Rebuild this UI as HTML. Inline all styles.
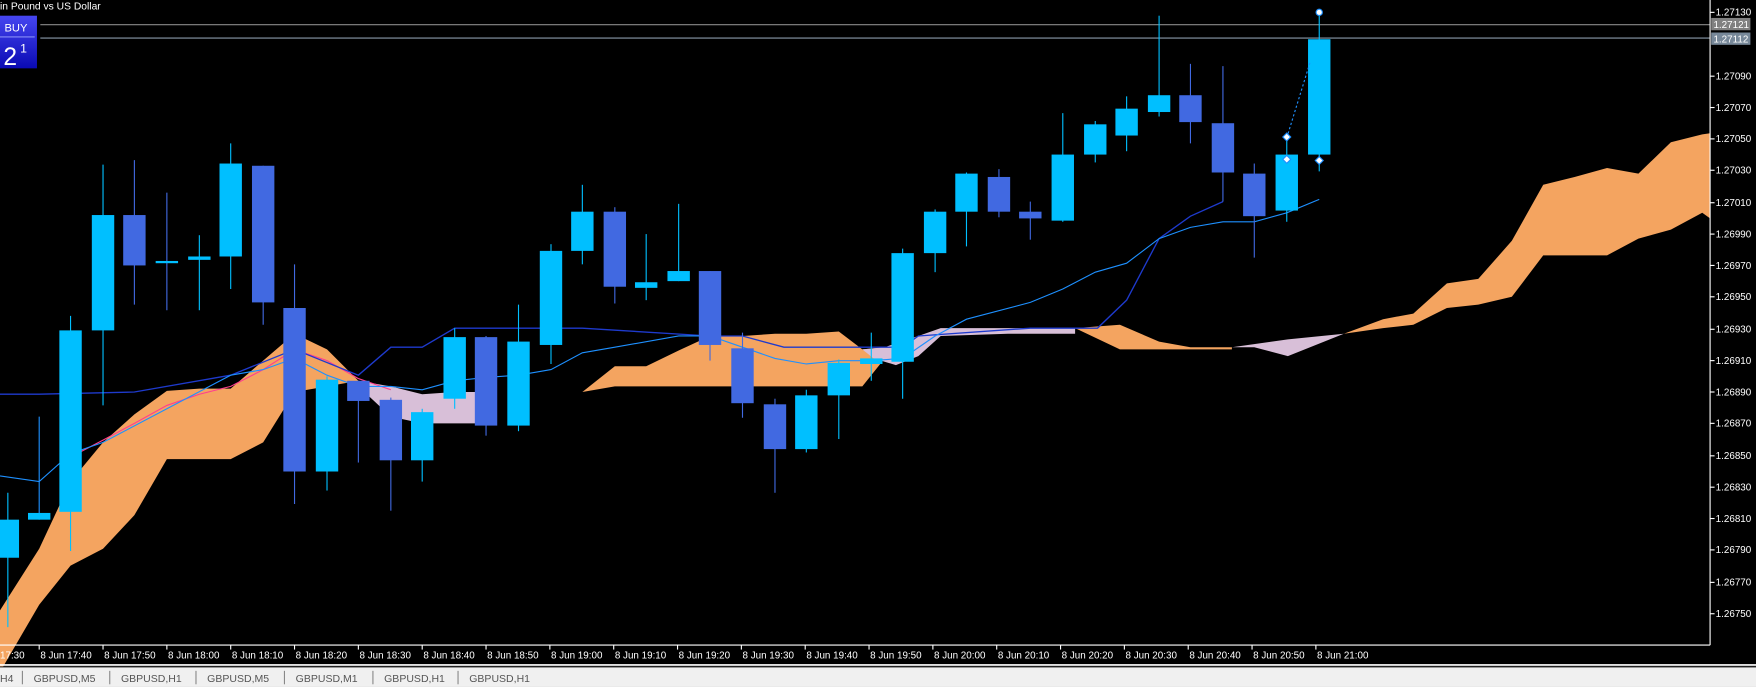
<!DOCTYPE html>
<html><head><meta charset="utf-8"><style>
html,body{margin:0;padding:0;background:#000;width:1756px;height:687px;overflow:hidden}
svg{display:block}
text{font-family:"Liberation Sans","DejaVu Sans",sans-serif}
</style></head><body>
<svg width="1756" height="687" viewBox="0 0 1568 613.4" xmlns="http://www.w3.org/2000/svg">
<rect x="0" y="0" width="1568" height="613.4" fill="#000"/>
<!-- cloud -->
<g stroke="none">
<polygon fill="#F4A460" points="0,545 35,490 63,430 92,395 120,370 149,349 178,347 206,347 235,322 263,298 292,312 320,340 292,345 263,350 235,395 206,410 178,410 149,410 120,460 92,490 63,505 35,540 0,600 0,613"/>
<polygon fill="#D8BFD8" points="320,340 349,345 377,352 406,350 434,350 434,378 406,378 377,378 349,372 320,345"/>
<polygon fill="#F4A460" points="520,350 549,327 577,327 606,313 634,300 663,300 692,298 720,298 749,296 770,312 790,310 790,320 770,345 749,345 720,345 692,345 663,345 634,345 606,345 577,345 549,345"/>
<polygon fill="#D8BFD8" points="770,312 790,310 820,300 840,293 900,293 960,293 960,298 900,298 840,300 820,318 800,326 780,320"/>
<polygon fill="#F4A460" points="960,293 1000,290 1035,305 1063,310 1100,310 1100,312 1063,312 1000,312"/>
<polygon fill="#D8BFD8" points="1100,310 1150,303 1200,298 1150,318 1120,310"/>
<polygon fill="#F4A460" points="1200,298 1235,285 1262,280 1292,253 1320,249 1350,215 1378,165 1406,158 1435,150 1463,155 1492,127 1520,120 1527,119 1527,195 1520,190 1492,205 1463,213 1435,228 1406,228 1378,228 1350,265 1320,272 1292,275 1262,290 1235,293"/>
</g>
<!-- lines -->
<polyline fill="none" stroke="#FF3E8E" stroke-width="1" points="63,408 92,393 120,378 149,362 178,352 206,345 235,330 263,312 292,322 320,338 349,348"/>
<polyline fill="none" stroke="#1E3ACD" stroke-width="1.2" points="0,352 35,352 120,350 206,335 263,312 320,335 349,310 377,310 406,293 520,293 634,300 663,300 700,310 806,310 820,300 920,293 980,293 1006,268 1035,213 1063,193 1092,180"/>
<polyline fill="none" stroke="#1E90FF" stroke-width="1" points="0,425 35,430 63,405 92,395 149,365 206,335 235,330 263,320 292,335 320,345 349,345 377,348 406,340 434,337 463,335 492,330 520,315 549,310 606,300 634,300 663,310 692,320 720,325 749,322 778,322 806,320 835,300 863,285 920,270 949,258 978,243 1006,235 1035,213 1063,203 1092,198 1120,198 1149,190 1178,178"/>
<!-- horizontal lines -->
<line x1="36" y1="22" x2="1527" y2="22" stroke="#8a8a8a"/>
<line x1="36" y1="34" x2="1527" y2="34" stroke="#8a9aaa"/>
<!-- candles -->
<g id="c"></g>
<g stroke-width="1">
<!-- x, high, low, top, bottom, color -->
<line x1="7" y1="440" x2="7" y2="560" stroke="#00BFFF"/><rect x="0" y="464" width="17" height="34" fill="#00BFFF"/>
<line x1="35" y1="372" x2="35" y2="464" stroke="#1E90FF"/><rect x="25" y="458" width="20" height="6" fill="#00BFFF"/>
<line x1="63" y1="282" x2="63" y2="492" stroke="#00BFFF"/><rect x="53" y="295" width="20" height="162" fill="#00BFFF"/>
<line x1="92" y1="147" x2="92" y2="362" stroke="#00BFFF"/><rect x="82" y="192" width="20" height="103" fill="#00BFFF"/>
<line x1="120" y1="143" x2="120" y2="272" stroke="#4169E1"/><rect x="110" y="192" width="20" height="45" fill="#4169E1"/>
<line x1="149" y1="172" x2="149" y2="277" stroke="#4169E1"/><rect x="139" y="233" width="20" height="2" fill="#00BFFF"/>
<line x1="178" y1="210" x2="178" y2="277" stroke="#00BFFF"/><rect x="168" y="229" width="20" height="3" fill="#00BFFF"/>
<line x1="206" y1="128" x2="206" y2="258" stroke="#00BFFF"/><rect x="196" y="146" width="20" height="83" fill="#00BFFF"/>
<line x1="235" y1="148" x2="235" y2="290" stroke="#4169E1"/><rect x="225" y="148" width="20" height="122" fill="#4169E1"/>
<line x1="263" y1="236" x2="263" y2="450" stroke="#4169E1"/><rect x="253" y="275" width="20" height="146" fill="#4169E1"/>
<line x1="292" y1="336" x2="292" y2="438" stroke="#00BFFF"/><rect x="282" y="339" width="20" height="82" fill="#00BFFF"/>
<line x1="320" y1="340" x2="320" y2="413" stroke="#4169E1"/><rect x="310" y="340" width="20" height="18" fill="#4169E1"/>
<line x1="349" y1="355" x2="349" y2="456" stroke="#4169E1"/><rect x="339" y="357" width="20" height="54" fill="#4169E1"/>
<line x1="377" y1="365" x2="377" y2="430" stroke="#00BFFF"/><rect x="367" y="368" width="20" height="43" fill="#00BFFF"/>
<line x1="406" y1="293" x2="406" y2="365" stroke="#00BFFF"/><rect x="396" y="301" width="20" height="55" fill="#00BFFF"/>
<line x1="434" y1="300" x2="434" y2="389" stroke="#4169E1"/><rect x="424" y="301" width="20" height="79" fill="#4169E1"/>
<line x1="463" y1="272" x2="463" y2="385" stroke="#00BFFF"/><rect x="453" y="305" width="20" height="75" fill="#00BFFF"/>
<line x1="492" y1="218" x2="492" y2="325" stroke="#00BFFF"/><rect x="482" y="224" width="20" height="84" fill="#00BFFF"/>
<line x1="520" y1="165" x2="520" y2="236" stroke="#00BFFF"/><rect x="510" y="189" width="20" height="35" fill="#00BFFF"/>
<line x1="549" y1="185" x2="549" y2="271" stroke="#4169E1"/><rect x="539" y="189" width="20" height="67" fill="#4169E1"/>
<line x1="577" y1="209" x2="577" y2="268" stroke="#00BFFF"/><rect x="567" y="252" width="20" height="5" fill="#00BFFF"/>
<line x1="606" y1="182" x2="606" y2="251" stroke="#00BFFF"/><rect x="596" y="242" width="20" height="9" fill="#00BFFF"/>
<line x1="634" y1="242" x2="634" y2="322" stroke="#4169E1"/><rect x="624" y="242" width="20" height="66" fill="#4169E1"/>
<line x1="663" y1="297" x2="663" y2="373" stroke="#4169E1"/><rect x="653" y="311" width="20" height="49" fill="#4169E1"/>
<line x1="692" y1="356" x2="692" y2="440" stroke="#4169E1"/><rect x="682" y="361" width="20" height="40" fill="#4169E1"/>
<line x1="720" y1="348" x2="720" y2="404" stroke="#00BFFF"/><rect x="710" y="353" width="20" height="48" fill="#00BFFF"/>
<line x1="749" y1="321" x2="749" y2="392" stroke="#00BFFF"/><rect x="739" y="324" width="20" height="29" fill="#00BFFF"/>
<line x1="778" y1="297" x2="778" y2="340" stroke="#00BFFF"/><rect x="768" y="320" width="20" height="5" fill="#00BFFF"/>
<line x1="806" y1="222" x2="806" y2="356" stroke="#00BFFF"/><rect x="796" y="226" width="20" height="97" fill="#00BFFF"/>
<line x1="835" y1="187" x2="835" y2="243" stroke="#00BFFF"/><rect x="825" y="189" width="20" height="37" fill="#00BFFF"/>
<line x1="863" y1="154" x2="863" y2="220" stroke="#00BFFF"/><rect x="853" y="155" width="20" height="34" fill="#00BFFF"/>
<line x1="892" y1="151" x2="892" y2="194" stroke="#4169E1"/><rect x="882" y="158" width="20" height="31" fill="#4169E1"/>
<line x1="920" y1="180" x2="920" y2="214" stroke="#4169E1"/><rect x="910" y="189" width="20" height="6" fill="#4169E1"/>
<line x1="949" y1="101" x2="949" y2="198" stroke="#00BFFF"/><rect x="939" y="138" width="20" height="59" fill="#00BFFF"/>
<line x1="978" y1="108" x2="978" y2="145" stroke="#00BFFF"/><rect x="968" y="111" width="20" height="27" fill="#00BFFF"/>
<line x1="1006" y1="86" x2="1006" y2="135" stroke="#00BFFF"/><rect x="996" y="97" width="20" height="24" fill="#00BFFF"/>
<line x1="1035" y1="14" x2="1035" y2="104" stroke="#00BFFF"/><rect x="1025" y="85" width="20" height="15" fill="#00BFFF"/>
<line x1="1063" y1="57" x2="1063" y2="128" stroke="#4169E1"/><rect x="1053" y="85" width="20" height="24" fill="#4169E1"/>
<line x1="1092" y1="59" x2="1092" y2="180" stroke="#4169E1"/><rect x="1082" y="110" width="20" height="44" fill="#4169E1"/>
<line x1="1120" y1="146" x2="1120" y2="230" stroke="#4169E1"/><rect x="1110" y="155" width="20" height="38" fill="#4169E1"/>
<line x1="1149" y1="125" x2="1149" y2="198" stroke="#00BFFF"/><rect x="1139" y="138" width="20" height="50" fill="#00BFFF"/>
<line x1="1178" y1="12" x2="1178" y2="153" stroke="#00BFFF"/><rect x="1168" y="35" width="20" height="103" fill="#00BFFF"/>
</g>
<line x1="1149" y1="123" x2="1170" y2="55" stroke="#1E90FF" stroke-dasharray="2,2"/>
<g fill="#fff" stroke="#1E90FF" stroke-width="1">
<rect x="1146" y="120" width="5" height="5" transform="rotate(45 1149 123)"/>
<rect x="1146" y="140" width="5" height="5" transform="rotate(45 1149 143)"/>
<rect x="1175" y="141" width="5" height="5" transform="rotate(45 1178 144)"/>
<circle cx="1178" cy="11" r="2.8"/>
</g>
<!-- title & buy -->
<text x="0" y="8.5" fill="#fff" font-size="9.2">in Pound vs US Dollar</text>
<defs><linearGradient id="g" x1="0" y1="0" x2="0" y2="1"><stop offset="0" stop-color="#4646F0"/><stop offset="1" stop-color="#0A0AB4"/></linearGradient></defs>
<rect x="0" y="14" width="33" height="47" fill="url(#g)"/>
<line x1="0" y1="33" x2="31" y2="33" stroke="#9fa8ff" stroke-width="0.8"/>
<text x="4" y="28" fill="#fff" font-size="10">BUY</text>
<text x="3" y="58" fill="#fff" font-size="22">2</text>
<text x="18" y="47" fill="#fff" font-size="11">1</text>
<!-- price axis -->
<line x1="1527" y1="0" x2="1527" y2="576" stroke="#fff"/>
<g fill="#fff" font-size="8.8">
<text x="1532" y="14">1.27130</text>
<text x="1532" y="71">1.27090</text>
<text x="1532" y="99">1.27070</text>
<text x="1532" y="127">1.27050</text>
<text x="1532" y="155">1.27030</text>
<text x="1532" y="184">1.27010</text>
<text x="1532" y="212">1.26990</text>
<text x="1532" y="240">1.26970</text>
<text x="1532" y="268">1.26950</text>
<text x="1532" y="297">1.26930</text>
<text x="1532" y="325">1.26910</text>
<text x="1532" y="353">1.26890</text>
<text x="1532" y="381">1.26870</text>
<text x="1532" y="410">1.26850</text>
<text x="1532" y="438">1.26830</text>
<text x="1532" y="466">1.26810</text>
<text x="1532" y="494">1.26790</text>
<text x="1532" y="523">1.26770</text>
<text x="1532" y="551">1.26750</text>
</g>
<g stroke="#fff">
<line x1="1527" y1="11" x2="1531" y2="11"/><line x1="1527" y1="68" x2="1531" y2="68"/><line x1="1527" y1="96" x2="1531" y2="96"/><line x1="1527" y1="124" x2="1531" y2="124"/><line x1="1527" y1="152" x2="1531" y2="152"/><line x1="1527" y1="181" x2="1531" y2="181"/><line x1="1527" y1="209" x2="1531" y2="209"/><line x1="1527" y1="237" x2="1531" y2="237"/><line x1="1527" y1="265" x2="1531" y2="265"/><line x1="1527" y1="294" x2="1531" y2="294"/><line x1="1527" y1="322" x2="1531" y2="322"/><line x1="1527" y1="350" x2="1531" y2="350"/><line x1="1527" y1="378" x2="1531" y2="378"/><line x1="1527" y1="407" x2="1531" y2="407"/><line x1="1527" y1="435" x2="1531" y2="435"/><line x1="1527" y1="463" x2="1531" y2="463"/><line x1="1527" y1="491" x2="1531" y2="491"/><line x1="1527" y1="520" x2="1531" y2="520"/><line x1="1527" y1="548" x2="1531" y2="548"/>
</g>
<rect x="1528" y="16" width="35" height="11" fill="#808080"/>
<text x="1530" y="25" fill="#fff" font-size="8.8">1.27121</text>
<rect x="1528" y="29" width="35" height="11" fill="#778899"/>
<text x="1530" y="38" fill="#fff" font-size="8.8">1.27112</text>
<!-- time axis -->
<line x1="0" y1="576" x2="1527" y2="576" stroke="#fff"/>
<g fill="#fff" font-size="8.8">
<text x="0" y="588">17:30</text>
<text x="36" y="588">8 Jun 17:40</text><text x="93" y="588">8 Jun 17:50</text><text x="150" y="588">8 Jun 18:00</text><text x="207" y="588">8 Jun 18:10</text><text x="264" y="588">8 Jun 18:20</text><text x="321" y="588">8 Jun 18:30</text><text x="378" y="588">8 Jun 18:40</text><text x="435" y="588">8 Jun 18:50</text><text x="492" y="588">8 Jun 19:00</text><text x="549" y="588">8 Jun 19:10</text><text x="606" y="588">8 Jun 19:20</text><text x="663" y="588">8 Jun 19:30</text><text x="720" y="588">8 Jun 19:40</text><text x="777" y="588">8 Jun 19:50</text><text x="834" y="588">8 Jun 20:00</text><text x="891" y="588">8 Jun 20:10</text><text x="948" y="588">8 Jun 20:20</text><text x="1005" y="588">8 Jun 20:30</text><text x="1062" y="588">8 Jun 20:40</text><text x="1119" y="588">8 Jun 20:50</text><text x="1176" y="588">8 Jun 21:00</text>
</g>
<g stroke="#fff">
<line x1="35" y1="576" x2="35" y2="580"/><line x1="92" y1="576" x2="92" y2="580"/><line x1="149" y1="576" x2="149" y2="580"/><line x1="206" y1="576" x2="206" y2="580"/><line x1="263" y1="576" x2="263" y2="580"/><line x1="320" y1="576" x2="320" y2="580"/><line x1="377" y1="576" x2="377" y2="580"/><line x1="434" y1="576" x2="434" y2="580"/><line x1="491" y1="576" x2="491" y2="580"/><line x1="548" y1="576" x2="548" y2="580"/><line x1="605" y1="576" x2="605" y2="580"/><line x1="662" y1="576" x2="662" y2="580"/><line x1="719" y1="576" x2="719" y2="580"/><line x1="776" y1="576" x2="776" y2="580"/><line x1="833" y1="576" x2="833" y2="580"/><line x1="890" y1="576" x2="890" y2="580"/><line x1="947" y1="576" x2="947" y2="580"/><line x1="1004" y1="576" x2="1004" y2="580"/><line x1="1061" y1="576" x2="1061" y2="580"/><line x1="1118" y1="576" x2="1118" y2="580"/><line x1="1175" y1="576" x2="1175" y2="580"/>
</g>
<!-- tabs -->
<rect x="0" y="593" width="1568" height="1.5" fill="#fff"/>
<rect x="0" y="595" width="1568" height="18.4" fill="#F0F0F0"/>
<line x1="0" y1="595.5" x2="1568" y2="595.5" stroke="#000" stroke-width="0.8"/>
<g fill="#555" font-size="9.4">
<text x="0" y="609">H4</text><text x="30" y="609">GBPUSD,M5</text><text x="108" y="609">GBPUSD,H1</text><text x="185" y="609">GBPUSD,M5</text><text x="264" y="609">GBPUSD,M1</text><text x="343" y="609">GBPUSD,H1</text><text x="419" y="609">GBPUSD,H1</text>
</g>
<g stroke="#888">
<line x1="20" y1="599" x2="20" y2="611"/><line x1="98" y1="599" x2="98" y2="611"/><line x1="175" y1="599" x2="175" y2="611"/><line x1="254" y1="599" x2="254" y2="611"/><line x1="333" y1="599" x2="333" y2="611"/><line x1="409" y1="599" x2="409" y2="611"/>
</g>
</svg>
</body></html>
